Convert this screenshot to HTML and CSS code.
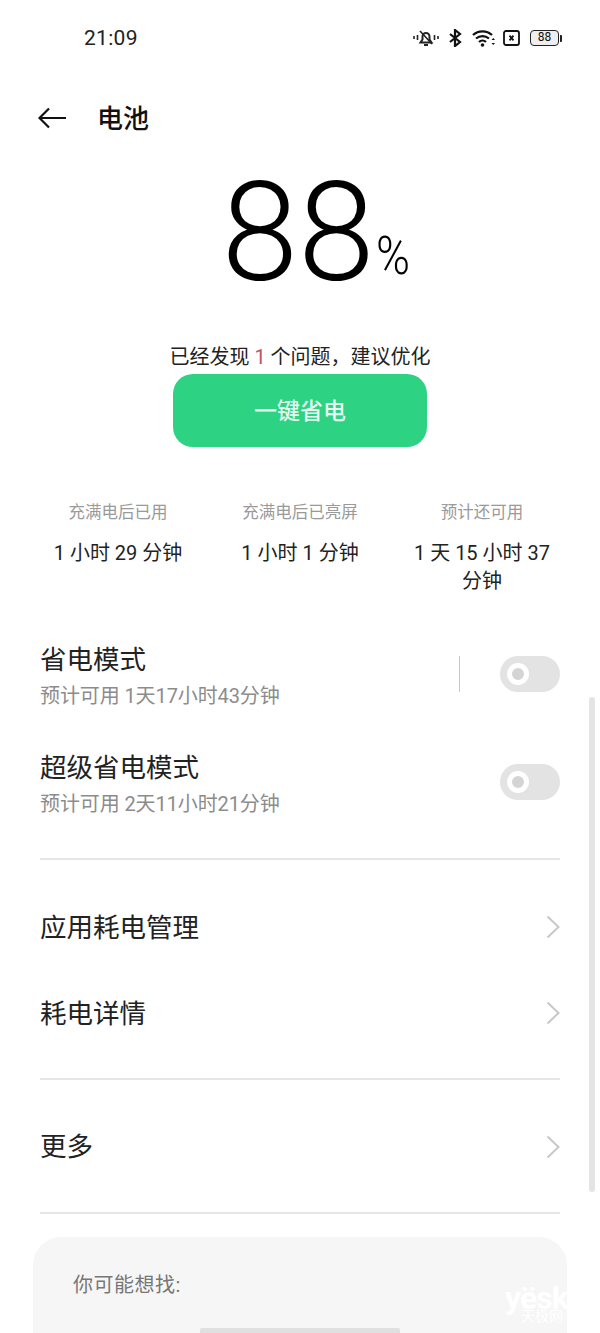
FILE: index.html
```html
<!DOCTYPE html>
<html lang="zh-CN">
<head>
<meta charset="utf-8">
<title>电池</title>
<link rel="stylesheet" href="styles.css">
</head>
<body>
<div class="screen">
  <div class="status">
    <span class="time">21:09</span>
    <div class="status-icons">
      <svg class="ic-bell" width="26" height="16" viewBox="0 0 26 16" fill="none" stroke="#222" stroke-width="2"><path d="M1 6v3M4.500 5v5M21.500 5v5M25 6v3" stroke-width="1.600"/><path d="M7.500 12.500h11l-2-3V6.500a3.500 3.500 0 0 0-7 0v3z"/><path d="M11 15h4"/><path d="M7 1l12 13" stroke-width="1.600"/></svg>
      <svg class="ic-bt" width="13" height="18" viewBox="0 0 13 18" fill="none" stroke="#111" stroke-width="2.200"><path d="M1 5l10 8-5 4V1l5 4-10 8"/></svg>
      <svg class="ic-wifi" width="23" height="18" viewBox="0 0 23 18" fill="none" stroke="#111" stroke-width="2.300"><path d="M1 6a14 14 0 0 1 19 0M4 9.500a10 10 0 0 1 13 0M7 13a5 5 0 0 1 7 0" /><circle cx="10.500" cy="16" r="1.800" fill="#111" stroke="none"/><path d="M19.500 11l1.800-2 1.700 2zM19.500 14l1.800 2 1.700-2z" fill="#111" stroke="none"/></svg>
      <svg class="ic-box" width="17" height="16" viewBox="0 0 17 16" fill="none" stroke="#111"><rect x="1" y="1" width="15" height="14" rx="2" stroke-width="1.800"/><path d="M6.500 5.700l4 4.600M10.500 5.700l-4 4.600" stroke-width="1.800"/></svg>
      <div class="battery"><span class="battery-body">88</span><span class="battery-tip"></span></div>
    </div>
  </div>

  <header class="header">
    <svg class="back" width="28" height="22" viewBox="0 0 28 22" fill="none" stroke="#111" stroke-width="2.200"><path d="M11 1.500L1.500 11l9.500 9.500M1.500 11H28"/></svg>
    <h1 class="title">电池</h1>
  </header>

  <div class="level"><span class="level-num">88</span><span class="level-pct">%</span></div>

  <p class="advice">已经发现 <span class="advice-num">1</span> 个问题，建议优化</p>
  <button class="save-btn">一键省电</button>

  <div class="stats">
    <div class="stat"><div class="stat-label">充满电后已用</div><div class="stat-value">1 小时 29 分钟</div></div>
    <div class="stat"><div class="stat-label">充满电后已亮屏</div><div class="stat-value">1 小时 1 分钟</div></div>
    <div class="stat"><div class="stat-label">预计还可用</div><div class="stat-value">1 天 15 小时 37 分钟</div></div>
  </div>

  <div class="modes">
    <div class="mode">
      <div class="mode-text"><div class="row-title">省电模式</div><div class="mode-sub">预计可用 1天17小时43分钟</div></div>
      <span class="vline"></span>
      <span class="toggle"><span class="knob"></span></span>
    </div>
    <div class="mode">
      <div class="mode-text"><div class="row-title">超级省电模式</div><div class="mode-sub">预计可用 2天11小时21分钟</div></div>
      <span class="toggle"><span class="knob"></span></span>
    </div>
  </div>

  <div class="group group-a">
    <div class="link"><span class="row-title">应用耗电管理</span><svg class="chev" width="14" height="24" viewBox="0 0 14 24" fill="none" stroke="#c8c8c8" stroke-width="2"><path d="M1.500 1.500L12.500 12 1.500 22.500"/></svg></div>
    <div class="link"><span class="row-title">耗电详情</span><svg class="chev" width="14" height="24" viewBox="0 0 14 24" fill="none" stroke="#c8c8c8" stroke-width="2"><path d="M1.500 1.500L12.500 12 1.500 22.500"/></svg></div>
  </div>

  <div class="group group-b">
    <div class="link"><span class="row-title">更多</span><svg class="chev" width="14" height="24" viewBox="0 0 14 24" fill="none" stroke="#c8c8c8" stroke-width="2"><path d="M1.500 1.500L12.500 12 1.500 22.500"/></svg></div>
  </div>

  <section class="card">
    <div class="card-title">你可能想找:</div>
    <div class="wm"><div class="wm-en">yësk</div><div class="wm-cn">天极网</div></div>
  </section>

  <div class="scrollbar"></div>
  <div class="home"></div>
</div>
</body>
</html>
```
FILE: styles.css
```css
* { box-sizing: border-box; }
html, body { margin: 0; padding: 0; background: #fff; }
body { font-family: Roboto, "Noto Sans CJK SC", sans-serif; color: #111; }
.screen { position: relative; width: 600px; height: 1333px; overflow: hidden; background: #fff; }

.status { height: 75px; padding: 25px 38px 0 84px; display: flex; justify-content: space-between; align-items: flex-start; }
.time { font-size: 21px; line-height: 26px; color: #222; letter-spacing: .3px; }
.status-icons { display: flex; align-items: center; gap: 10px; height: 28px; margin-top: -1px; }
.ic-box { margin-left: -2px; }
.battery { display: flex; align-items: center; gap: 1px; }
.battery-body { width: 29px; height: 16px; border: 1.500px solid #222; border-radius: 4px; background: #eee; font-size: 12px; line-height: 13px; text-align: center; color: #111; }
.battery-tip { width: 2px; height: 7px; background: #222; border-radius: 0 1px 1px 0; }

.header { height: 86px; display: flex; align-items: center; padding-left: 38px; }
.back { flex: none; }
.title { margin: 2px 0 0 31px; font-size: 26px; font-weight: 500; line-height: 34px; color: #111; }

.level { height: 181px; display: flex; justify-content: center; align-items: flex-start; padding-left: 34px; color: #000; }
.level-num { font-size: 138px; font-weight: 300; line-height: 144px; }
.level-pct { font-size: 50px; font-weight: 300; line-height: 54px; margin: 70px 0 0 1px; transform: scale(.92, 1.08); transform-origin: left bottom; }

.advice { margin: 0; height: 30px; font-size: 20px; line-height: 30px; text-align: center; color: #222; }
.advice-num { color: #c0545c; }
.save-btn { display: block; width: 254px; height: 73px; margin: 2px auto 0; border: 0; border-radius: 20px; background: #2dd283; color: #e8faf1; font: 500 23px/71px Roboto, "Noto Sans CJK SC", sans-serif; padding: 2px 0 0; }

.stats { display: grid; grid-template-columns: repeat(3, 160px); justify-content: center; column-gap: 22px; margin-top: 53px; height: 130px; }
.stat { text-align: center; }
.stat-label { font-size: 16.500px; line-height: 26px; color: #9a9a9a; }
.stat-value { margin-top: 13px; font-size: 20px; line-height: 28px; color: #222; }

.modes { margin: 0 40px; padding-bottom: 12px; }
.mode { height: 108px; display: flex; align-items: flex-start; padding-top: 10px; }
.mode-text { flex: 1; }
.row-title { font-size: 26.500px; line-height: 40px; color: #222; }
.mode-sub { font-size: 20px; line-height: 28px; margin-top: 2px; color: #8c8c8c; letter-spacing: -.1px; }
.vline { width: 1px; height: 36px; margin: 16px 40px 0 0; background: #c9c9c9; }
.toggle { flex: none; width: 60px; height: 36px; margin-top: 16px; border-radius: 18px; background: #e3e3e3; display: flex; align-items: center; padding-left: 7px; }
.knob { width: 22px; height: 22px; border-radius: 50%; background: #d4d4d4; border: 5px solid #fff; }

.group { margin: 0 40px; border-top: 2px solid #e6e6e6; }
.group-a { height: 220px; padding-top: 25px; }
.group-b { height: 136px; padding-top: 24px; border-bottom: 2px solid #e6e6e6; margin-bottom: 23px; }
.group-a .chev { margin-top: -2px; }
.link { height: 86px; display: flex; justify-content: space-between; align-items: center; }

.card { margin: 0 33px; height: 200px; padding: 36px 40px; border-radius: 28px; background: #f6f6f6; position: relative; overflow: hidden; }
.card-title { font-size: 20px; line-height: 24px; color: #777; letter-spacing: .5px; }
.wm { position: absolute; left: 472px; top: 50px; color: #fff; white-space: nowrap; }
.wm-en { font-size: 32px; font-weight: 700; line-height: 23px; letter-spacing: -1px; }
.wm-cn { font-size: 14px; line-height: 12px; margin-left: 16px; }

.scrollbar { position: absolute; left: 589px; top: 697px; width: 6px; height: 495px; background: #e4e4e4; border-radius: 3px; }
.home { position: absolute; left: 200px; top: 1328px; width: 200px; height: 5px; background: #e0e0e0; border-radius: 2px 2px 0 0; }
```
